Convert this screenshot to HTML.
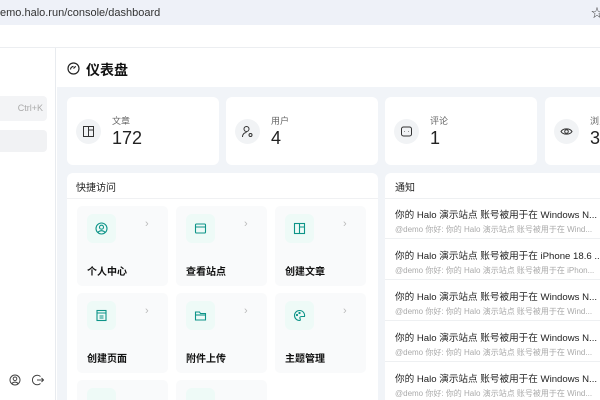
<!DOCTYPE html>
<html><head><meta charset="utf-8"><style>
*{margin:0;padding:0;box-sizing:border-box}
html,body{width:600px;height:400px;overflow:hidden}
body{position:relative;background:#fff;font-family:"Liberation Sans","Noto Sans CJK SC",sans-serif;color:#111}
#wrap{position:absolute;left:0;top:0;width:600px;height:400px;overflow:hidden}
.abs{position:absolute}
.url{left:0;top:0;width:600px;height:25px;background:#eef1f8;font-size:11px;color:#333;line-height:26px}
.side{left:0;top:48px;width:56px;height:352px;background:#fff;border-right:1px solid #e8ebef}
.main{left:57px;top:87px;width:543px;height:313px;background:#f1f4f8}
.card{background:#fff;border-radius:6px;position:absolute;overflow:hidden}
.ic{position:absolute;left:9px;top:22px;width:25px;height:25px;border-radius:50%;background:#f1f3f5}
.ic svg{position:absolute;left:6px;top:6px}
.lbl{position:absolute;left:45px;top:17px;font-size:9px;color:#666}
.num{position:absolute;left:45px;top:31px;font-size:18px;color:#222}
.tile{position:absolute;width:91px;height:80px;background:#f9fafb;border-radius:5px}
.tico{position:absolute;left:10px;top:8px;width:29px;height:29px;border-radius:6px;background:#eefaf7}
.tico svg{position:absolute;left:8px;top:8px}
.chev{position:absolute;left:68px;top:12px;color:#bbb;font-size:11px}
.tl{position:absolute;left:10px;top:57px;font-size:10px;font-weight:bold;color:#111}
.n{position:absolute;left:10px;white-space:nowrap}
.n b{font-weight:normal;color:#222;display:block;font-size:9.6px}
.n i{font-style:normal;color:#aaa;font-size:8px;display:block;margin-top:3px}
.hr{position:absolute;left:0;width:215px;height:1px;background:#eef0f2}
</style></head><body><div id="wrap">
<div class="abs url">emo.halo.run/console/dashboard<span style="position:absolute;left:591px;top:0;font-size:12px">☆</span></div>
<div class="abs" style="left:0;top:47px;width:600px;height:1px;background:#eceef1"></div>
<div class="abs side">
 <div class="abs" style="left:0;top:48px;width:47px;height:25px;background:#f3f4f6;border-radius:0 4px 4px 0;font-size:9px;color:#aaa;text-align:right;padding-right:4px;line-height:25px">Ctrl+K</div>
 <div class="abs" style="left:0;top:82px;width:47px;height:22px;background:#f1f2f4;border-radius:0 4px 4px 0"></div>
 <svg class="abs" style="left:9px;top:326px" width="12" height="12" viewBox="0 0 12 12" fill="none" stroke="#444" stroke-width="1"><circle cx="6" cy="6" r="5"/><circle cx="6" cy="4.8" r="1.8"/><path d="M2.8 9.6c1.8-2 4.6-2 6.4 0"/></svg>
 <svg class="abs" style="left:32px;top:326px" width="12" height="12" viewBox="0 0 12 12" fill="none" stroke="#444" stroke-width="1"><path d="M8.5 2.5A4.8 4.8 0 1 0 8.5 9.5"/><path d="M5 6h6.5M9.5 4l2 2-2 2"/></svg>
</div>
<div class="abs" style="left:57px;top:48px;width:543px;height:39px;background:#fff"></div>
<svg class="abs" style="left:67px;top:62px" width="13" height="13" viewBox="0 0 13 13" fill="none" stroke="#222" stroke-width="1.2"><circle cx="6.5" cy="6.5" r="5.5"/><path d="M6.5 6.5l2.2-2.2"/><path d="M3.5 7.5a3 3 0 0 1 3-3"/></svg>
<div class="abs" style="left:86px;top:60px;font-size:14px;font-weight:bold;color:#111">仪表盘</div>
<div class="abs main"></div>
<div class="card" style="left:67px;top:97px;width:152px;height:68px"><div class="ic"><svg width="13" height="13" viewBox="0 0 13 13" fill="none" stroke="#333"><rect x="1.5" y="1.5" width="10" height="10"/><path d="M6.5 1.5v10M6.5 5h5"/></svg></div><div class="lbl">文章</div><div class="num">172</div></div>
<div class="card" style="left:226px;top:97px;width:152px;height:68px"><div class="ic"><svg width="13" height="13" viewBox="0 0 13 13" fill="none" stroke="#333"><circle cx="5.5" cy="4" r="2.5"/><path d="M1.5 12c0-3 2-4.5 4-4.5"/><circle cx="9.5" cy="10" r="1.5"/></svg></div><div class="lbl">用户</div><div class="num">4</div></div>
<div class="card" style="left:385px;top:97px;width:152px;height:68px"><div class="ic"><svg width="13" height="13" viewBox="0 0 13 13" fill="none" stroke="#333"><rect x="1.5" y="2" width="10" height="9" rx="2"/><path d="M4.5 6.5h.5M8 6.5h.5"/></svg></div><div class="lbl">评论</div><div class="num">1</div></div>
<div class="card" style="left:545px;top:97px;width:80px;height:68px"><div class="ic"><svg width="13" height="13" viewBox="0 0 13 13" fill="none" stroke="#333"><path d="M1 6.5C3 3 10 3 12 6.5 10 10 3 10 1 6.5z"/><circle cx="6.5" cy="6.5" r="1.8"/></svg></div><div class="lbl">浏览</div><div class="num">3</div></div>

<div class="card" style="left:67px;top:173px;width:311px;height:240px">
 <div class="abs" style="left:9px;top:6px;font-size:10px;color:#222">快捷访问</div>
 <div class="abs" style="left:0;top:25px;width:311px;height:1px;background:#f0f1f3"></div>
 <div class="tile" style="left:10px;top:33px"><div class="tico"><svg width="13" height="13" viewBox="0 0 13 13" fill="none" stroke="#0d9488" stroke-width="1.1"><circle cx="6.5" cy="6.5" r="5.5"/><circle cx="6.5" cy="5.2" r="2"/><path d="M3 10.3c2-2.2 5-2.2 7 0"/></svg></div><span class="chev">›</span><div class="tl">个人中心</div></div>
 <div class="tile" style="left:109px;top:33px"><div class="tico"><svg width="13" height="13" viewBox="0 0 13 13" fill="none" stroke="#0d9488" stroke-width="1.1"><rect x="1.5" y="2" width="10" height="9" rx="1"/><path d="M1.5 5h10"/></svg></div><span class="chev">›</span><div class="tl">查看站点</div></div>
 <div class="tile" style="left:208px;top:33px"><div class="tico"><svg width="13" height="13" viewBox="0 0 13 13" fill="none" stroke="#0d9488" stroke-width="1.1"><rect x="1.5" y="1.5" width="10" height="10"/><path d="M6.5 1.5v10M6.5 5h5"/></svg></div><span class="chev">›</span><div class="tl">创建文章</div></div>
 <div class="tile" style="left:10px;top:120px"><div class="tico"><svg width="13" height="13" viewBox="0 0 13 13" fill="none" stroke="#0d9488" stroke-width="1.1"><rect x="2" y="1.5" width="9" height="10"/><path d="M2 4h9M4.5 7h4M4.5 9h4"/></svg></div><span class="chev">›</span><div class="tl">创建页面</div></div>
 <div class="tile" style="left:109px;top:120px"><div class="tico"><svg width="13" height="13" viewBox="0 0 13 13" fill="none" stroke="#0d9488" stroke-width="1.1"><path d="M1.5 3h4l1 1.5h5v6.5h-10z"/><path d="M1.5 6h10"/></svg></div><span class="chev">›</span><div class="tl">附件上传</div></div>
 <div class="tile" style="left:208px;top:120px"><div class="tico"><svg width="13" height="13" viewBox="0 0 13 13" fill="none" stroke="#0d9488" stroke-width="1.1"><path d="M6.5 1.5a5 5 0 1 0 0 10c1 0 1-1 .5-2s0-2 1.5-2h3a5 5 0 0 0-5-6z"/><circle cx="4" cy="6" r=".6"/><circle cx="6.5" cy="4" r=".6"/></svg></div><span class="chev">›</span><div class="tl">主题管理</div></div>
 <div class="tile" style="left:10px;top:207px"><div class="tico"></div></div>
 <div class="tile" style="left:109px;top:207px"><div class="tico"></div></div>
</div>

<div class="card" style="left:385px;top:173px;width:230px;height:240px">
 <div class="abs" style="left:10px;top:6px;font-size:10px;color:#222">通知</div>
 <div class="hr" style="top:25px"></div>
 <div class="n" style="top:34px"><b>你的 Halo 演示站点 账号被用于在 Windows N...</b><i>@demo 你好:  你的 Halo 演示站点 账号被用于在 Wind...</i></div>
 <div class="hr" style="top:65px"></div>
 <div class="n" style="top:75px"><b>你的 Halo 演示站点 账号被用于在 iPhone 18.6 ...</b><i>@demo 你好:  你的 Halo 演示站点 账号被用于在 iPhon...</i></div>
 <div class="hr" style="top:106px"></div>
 <div class="n" style="top:116px"><b>你的 Halo 演示站点 账号被用于在 Windows N...</b><i>@demo 你好:  你的 Halo 演示站点 账号被用于在 Wind...</i></div>
 <div class="hr" style="top:147px"></div>
 <div class="n" style="top:157px"><b>你的 Halo 演示站点 账号被用于在 Windows N...</b><i>@demo 你好:  你的 Halo 演示站点 账号被用于在 Wind...</i></div>
 <div class="hr" style="top:188px"></div>
 <div class="n" style="top:198px"><b>你的 Halo 演示站点 账号被用于在 Windows N...</b><i>@demo 你好:  你的 Halo 演示站点 账号被用于在 Wind...</i></div>
</div>
</div></body></html>
